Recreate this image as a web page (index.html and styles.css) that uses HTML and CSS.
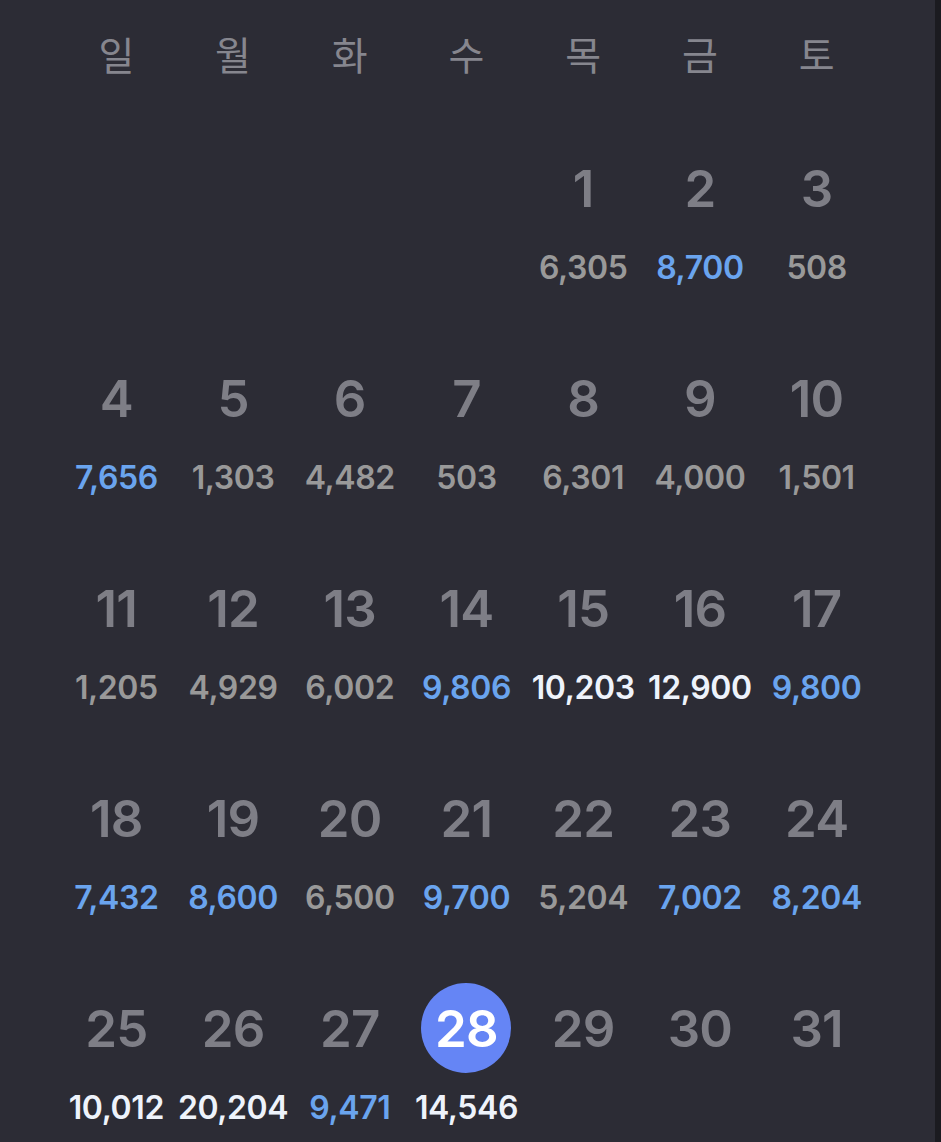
FILE: index.html
```html
<!DOCTYPE html>
<html lang="ko">
<head>
<meta charset="utf-8">
<title>Calendar</title>
<link rel="stylesheet" href="styles.css">
</head>
<body>
<div class="screen">
  <main class="calendar">
    <div class="weekdays">
      <div class="wd">일</div><div class="wd">월</div><div class="wd">화</div><div class="wd">수</div><div class="wd">목</div><div class="wd">금</div><div class="wd">토</div>
    </div>
    <div class="week">
      <div class="day empty"></div><div class="day empty"></div><div class="day empty"></div><div class="day empty"></div>
      <div class="day"><div class="num">1</div><div class="val">6,305</div></div>
      <div class="day"><div class="num">2</div><div class="val blue">8,700</div></div>
      <div class="day"><div class="num">3</div><div class="val">508</div></div>
    </div>
    <div class="week">
      <div class="day"><div class="num">4</div><div class="val blue">7,656</div></div>
      <div class="day"><div class="num">5</div><div class="val">1,303</div></div>
      <div class="day"><div class="num">6</div><div class="val">4,482</div></div>
      <div class="day"><div class="num">7</div><div class="val">503</div></div>
      <div class="day"><div class="num">8</div><div class="val">6,301</div></div>
      <div class="day"><div class="num">9</div><div class="val">4,000</div></div>
      <div class="day"><div class="num">10</div><div class="val">1,501</div></div>
    </div>
    <div class="week">
      <div class="day"><div class="num">11</div><div class="val">1,205</div></div>
      <div class="day"><div class="num">12</div><div class="val">4,929</div></div>
      <div class="day"><div class="num">13</div><div class="val">6,002</div></div>
      <div class="day"><div class="num">14</div><div class="val blue">9,806</div></div>
      <div class="day"><div class="num">15</div><div class="val white">10,203</div></div>
      <div class="day"><div class="num">16</div><div class="val white">12,900</div></div>
      <div class="day"><div class="num">17</div><div class="val blue">9,800</div></div>
    </div>
    <div class="week">
      <div class="day"><div class="num">18</div><div class="val blue">7,432</div></div>
      <div class="day"><div class="num">19</div><div class="val blue">8,600</div></div>
      <div class="day"><div class="num">20</div><div class="val">6,500</div></div>
      <div class="day"><div class="num">21</div><div class="val blue">9,700</div></div>
      <div class="day"><div class="num">22</div><div class="val">5,204</div></div>
      <div class="day"><div class="num">23</div><div class="val blue">7,002</div></div>
      <div class="day"><div class="num">24</div><div class="val blue">8,204</div></div>
    </div>
    <div class="week">
      <div class="day"><div class="num">25</div><div class="val white">10,012</div></div>
      <div class="day"><div class="num">26</div><div class="val white">20,204</div></div>
      <div class="day"><div class="num">27</div><div class="val blue">9,471</div></div>
      <div class="day"><div class="num today">28</div><div class="val white">14,546</div></div>
      <div class="day"><div class="num">29</div></div>
      <div class="day"><div class="num">30</div></div>
      <div class="day"><div class="num">31</div></div>
    </div>
  </main>
  <aside class="edge"></aside>
</div>
</body>
</html>
```

FILE: styles.css
```css
html, body {
  margin: 0;
  padding: 0;
  background: #2c2c35;
  height: 100%;
  overflow: hidden;
}
.screen {
  display: flex;
  height: 1142px;
  font-family: Inter, "Noto Sans", "Noto Sans CJK KR", sans-serif;
}
.calendar {
  flex: 1;
  padding: 0 60px 0 58px;
  box-sizing: border-box;
}
.edge {
  width: 6px;
  background: #1b1b20;
}
.weekdays {
  display: grid;
  grid-template-columns: repeat(7, 1fr);
  height: 114px;
  box-sizing: border-box;
  padding-bottom: 8px;
}
.wd {
  font-family: "Noto Sans CJK KR", sans-serif;
  font-size: 39px;
  font-weight: 400;
  color: #86868e;
  text-align: center;
  line-height: 106px;
}
.week {
  display: grid;
  grid-template-columns: repeat(7, 1fr);
  height: 210px;
  box-sizing: border-box;
  padding-top: 29px;
}
.day {
  display: flex;
  flex-direction: column;
  align-items: center;
  gap: 17px;
}
.num {
  width: 90px;
  height: 90px;
  border-radius: 50%;
  display: flex;
  align-items: center;
  justify-content: center;
  font-size: 51px;
  font-weight: 600;
  color: #7e7e86;
  letter-spacing: -0.8px;
}
.num.today {
  background: #6585f5;
  color: #ffffff;
}
.val {
  font-size: 32px;
  line-height: 36px;
  font-weight: 600;
  color: #999999;
  white-space: nowrap;
  letter-spacing: -0.4px;
}
.val.blue { color: #6aa4ee; }
.val.white { color: #eef3fb; }
```
